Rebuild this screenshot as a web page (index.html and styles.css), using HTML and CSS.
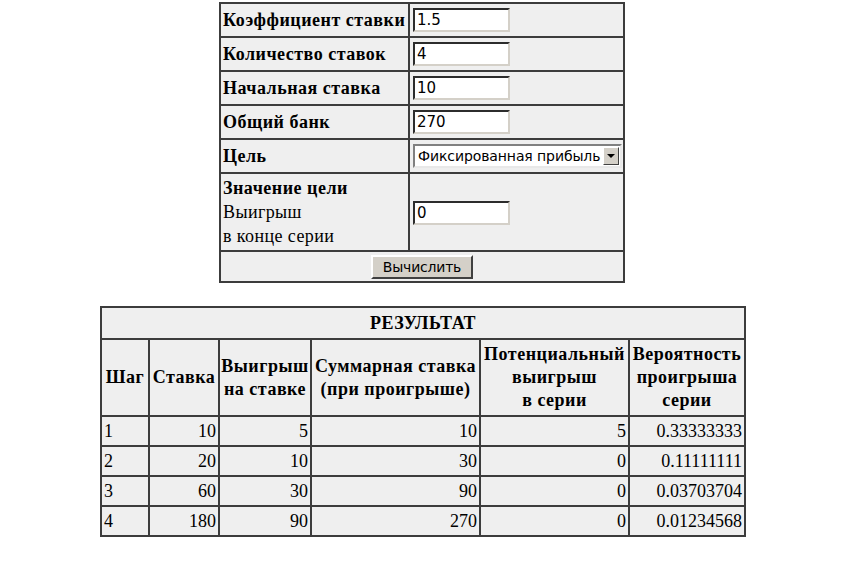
FILE: index.html
```html
<!DOCTYPE html>
<html lang="ru">
<head>
  <meta charset="UTF-8">
  <title>Калькулятор ставок</title>
  <link rel="stylesheet" href="styles.css">
</head>
<body>
  <table class="calc-form">
    <tr>
      <td class="label">Коэффициент ставки</td>
      <td class="field"><input type="text" value="1.5"></td>
    </tr>
    <tr>
      <td class="label">Количество ставок</td>
      <td class="field"><input type="text" value="4"></td>
    </tr>
    <tr>
      <td class="label">Начальная ставка</td>
      <td class="field"><input type="text" value="10"></td>
    </tr>
    <tr>
      <td class="label">Общий банк</td>
      <td class="field"><input type="text" value="270"></td>
    </tr>
    <tr>
      <td class="label">Цель</td>
      <td class="field">
        <div class="select">
          <span class="select-value">Фиксированная прибыль</span>
          <span class="select-arrow"></span>
        </div>
      </td>
    </tr>
    <tr class="goal-row">
      <td class="label">Значение цели<br><span class="hint">Выигрыш<br>в конце серии</span></td>
      <td class="field"><input type="text" value="0"></td>
    </tr>
    <tr>
      <td class="submit" colspan="2"><button type="button">Вычислить</button></td>
    </tr>
  </table>

  <table class="result">
    <colgroup>
      <col class="c-step">
      <col class="c-bet">
      <col class="c-win">
      <col class="c-sum">
      <col class="c-pot">
      <col class="c-prob">
    </colgroup>
    <tr>
      <th class="caption" colspan="6">РЕЗУЛЬТАТ</th>
    </tr>
    <tr class="heads">
      <th>Шаг</th>
      <th>Ставка</th>
      <th>Выигрыш<br>на ставке</th>
      <th>Суммарная ставка<br>(при проигрыше)</th>
      <th>Потенциальный<br>выигрыш<br>в серии</th>
      <th>Вероятность<br>проигрыша<br>серии</th>
    </tr>
    <tr>
      <td class="step">1</td><td>10</td><td>5</td><td>10</td><td>5</td><td>0.33333333</td>
    </tr>
    <tr>
      <td class="step">2</td><td>20</td><td>10</td><td>30</td><td>0</td><td>0.11111111</td>
    </tr>
    <tr>
      <td class="step">3</td><td>60</td><td>30</td><td>90</td><td>0</td><td>0.03703704</td>
    </tr>
    <tr>
      <td class="step">4</td><td>180</td><td>90</td><td>270</td><td>0</td><td>0.01234568</td>
    </tr>
  </table>
</body>
</html>
```

FILE: styles.css
```css
body {
  margin: 0;
  padding-top: 2px;
  background-color: #fff;
  font-family: "Liberation Serif", "Times New Roman", serif;
  font-size: 18px;
  color: #000;
}

table {
  border-collapse: separate;
  border-spacing: 0;
  border: 1px solid #3c3c3c;
  background-color: #efefef;
}

td, th {
  border: 1px solid #3c3c3c;
  padding: 0 2px;
}

/* form */

.calc-form {
  table-layout: fixed;
  width: 406px;
  margin-left: 219px;
}

.calc-form td {
  height: 32px;
}

.calc-form .label {
  width: 183px;
  font-weight: bold;
  letter-spacing: 0.5px;
  white-space: nowrap;
}

.calc-form .hint {
  font-weight: normal;
  letter-spacing: 0.4px;
}

.goal-row td {
  height: 76px;
  line-height: 24px;
}

.field input {
  box-sizing: border-box;
  width: 97px;
  height: 24px;
  margin: 0 0 0 1px;
  padding: 0 2px;
  border: 2px inset #d4d0c8;
  border-top-color: #808080;
  border-left-color: #808080;
  background-color: #fff;
  font-family: "DejaVu Sans", Tahoma, sans-serif;
  font-size: 15px;
  color: #000;
  vertical-align: middle;
}

.select {
  box-sizing: border-box;
  display: flex;
  align-items: center;
  width: 209px;
  height: 24px;
  margin-left: 1px;
  border: 2px solid #808080;
  border-right-color: #e8e8e8;
  border-bottom-color: #e8e8e8;
  background-color: #fff;
}

.select-value {
  flex: 1;
  padding-left: 3px;
  font-family: "DejaVu Sans", Tahoma, sans-serif;
  font-size: 14px;
  letter-spacing: -0.1px;
  white-space: nowrap;
  overflow: hidden;
}

.select-arrow {
  position: relative;
  box-sizing: border-box;
  width: 16px;
  height: 18px;
  margin-right: 1px;
  background-color: #d4d0c8;
  border: 1px solid #fff;
  border-right-color: #404040;
  border-bottom-color: #404040;
}

.select-arrow::after {
  content: "";
  position: absolute;
  left: 3px;
  top: 6px;
  border-left: 4px solid transparent;
  border-right: 4px solid transparent;
  border-top: 4px solid #000;
}

.calc-form .submit {
  text-align: center;
  height: 29px;
}

.submit button {
  width: 102px;
  height: 24px;
  padding: 0;
  background-color: #d4d0c8;
  border: 2px solid #fff;
  border-right-color: #404040;
  border-bottom-color: #404040;
  font-family: "DejaVu Sans", Tahoma, sans-serif;
  font-size: 14px;
  letter-spacing: -0.2px;
  color: #000;
}

/* result */

.result {
  table-layout: fixed;
  width: 644px;
  margin-top: 23px;
  margin-left: 100px;
}

.result th {
  font-weight: bold;
  text-align: center;
  vertical-align: middle;
  line-height: 23px;
  padding: 0;
  letter-spacing: 0.5px;
  white-space: nowrap;
}

.result .caption {
  height: 30px;
}

.heads th {
  height: 75px;
}

.c-step { width: 48px; }
.c-bet { width: 70px; }
.c-win { width: 92px; }
.c-sum { width: 169px; }
.c-pot { width: 149px; }
.c-prob { width: 116px; }

.result td {
  height: 28px;
  text-align: right;
  padding: 0 2px;
}

.result td.step {
  text-align: left;
}
```
